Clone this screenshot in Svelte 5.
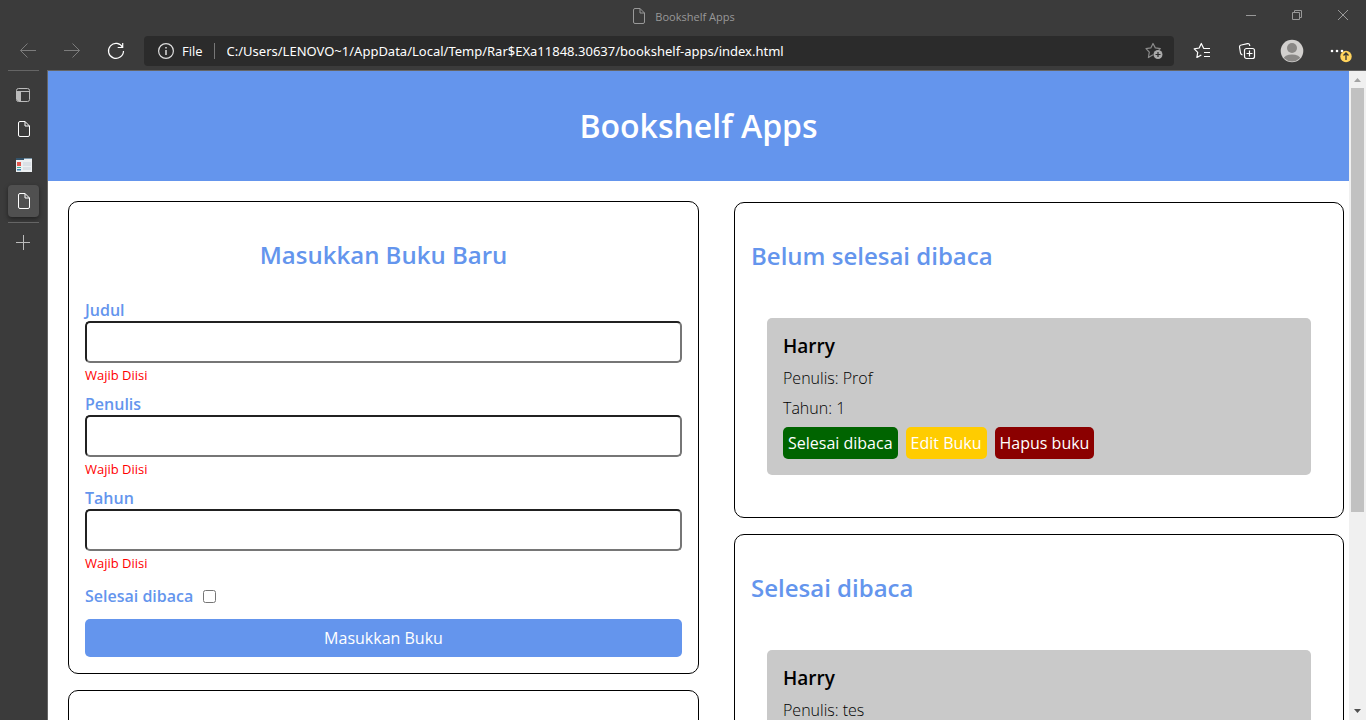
<script>
  const fields = [
    { id: 'judul', label: 'Judul', type: 'text' },
    { id: 'penulis', label: 'Penulis', type: 'text' },
    { id: 'tahun', label: 'Tahun', type: 'text' }
  ];
  const shelves = [
    { title: 'Belum selesai dibaca', book: { title: 'Harry', author: 'Prof', year: 1 }, action: 'Selesai dibaca' },
    { title: 'Selesai dibaca', book: { title: 'Harry', author: 'tes' } }
  ];
</script>

{#snippet page()}
  <svg width="16" height="18" viewBox="0 0 16 18" fill="none" stroke="currentColor" stroke-linejoin="round">
    <path d="M4 1.500H9L13.500 6v9a1.500 1.500 0 0 1-1.500 1.500H4A1.500 1.500 0 0 1 2.500 15V3A1.500 1.500 0 0 1 4 1.500z M9 1.500V6h4.500" />
  </svg>
{/snippet}

<div class="window">
  <div class="titlebar">
    <div class="title">{@render page()}<span>Bookshelf Apps</span></div>
    <div class="controls">
      <button aria-label="Minimize"><svg width="12" height="12" viewBox="0 0 12 12" stroke="currentColor"><path d="M1 6.500h10" /></svg></button>
      <button aria-label="Restore"><svg width="12" height="12" viewBox="0 0 12 12" fill="none" stroke="currentColor"><path d="M1.500 3.500h7v7h-7zM3.500 3.500v-2h7v7h-2" /></svg></button>
      <button aria-label="Close"><svg width="12" height="12" viewBox="0 0 12 12" fill="none" stroke="currentColor"><path d="M1 1l10 10M11 1L1 11" /></svg></button>
    </div>
  </div>

  <div class="toolbar">
    <button class="nav dim" aria-label="Back"><svg width="18" height="16" viewBox="0 0 18 16" fill="none" stroke="currentColor"><path d="M17 7.500H1.500M8.500 .5l-7 7 7 7" /></svg></button>
    <button class="nav dim" aria-label="Forward"><svg width="18" height="16" viewBox="0 0 18 16" fill="none" stroke="currentColor"><path d="M1 7.500h15.500M9.500 .5l7 7-7 7" /></svg></button>
    <button class="nav" aria-label="Refresh"><svg width="18" height="18" viewBox="0 0 18 18" fill="none" stroke="currentColor" stroke-width="1.2"><path d="M15.700 5.500a7.500 7.500 0 1 0 .8 3.500M15.700 1v4.500h-5" /></svg></button>
    <div class="address">
      <svg width="18" height="18" viewBox="0 0 18 18" fill="none" stroke="#ddd" stroke-width="1.2"><circle cx="9" cy="9" r="7.400" /><path d="M9 8v5M9 5v1.500" stroke-width="1.500" /></svg>
      <span class="file">File</span>
      <span class="url">C:/Users/LENOVO~1/AppData/Local/Temp/Rar$EXa11848.30637/bookshelf-apps/index.html</span>
      <button aria-label="Add to favorites">
        <svg width="18" height="18" viewBox="0 0 18 18" fill="none" stroke="#8b8b8b" stroke-width="1.200" stroke-linejoin="round"><path d="M8 12.700l-4.600 2.800.9-5.400L1 6.700l4.800-.8L8 1.500l2.300 4.400 5 .8-2.500 2.500" /><circle cx="13" cy="12.500" r="4.500" fill="#aaa" stroke="none" /><path d="M10.500 12.500h5M13 10v5" stroke="#2b2b2b" /></svg>
      </button>
    </div>
    <div class="tools">
      <button aria-label="Favorites"><svg width="18" height="18" viewBox="0 0 18 18" fill="none" stroke="currentColor" stroke-width="1.200" stroke-linejoin="round"><path d="M10.700 6.200h-.1L8.300 1.500 6.200 6l-5 .8 3.500 3.500-.8 5.200L8.300 13M10.500 6.500H17M11 10.500h6M11 14.500h6" /></svg></button>
      <button aria-label="Collections"><svg width="18" height="18" viewBox="0 0 18 18" fill="none" stroke="currentColor" stroke-width="1.200"><rect x="6.500" y="6.500" width="10" height="10" rx="2" /><path d="M11.500 8.500v6M8.500 11.500h6M4.500 13c-1.500-.4-1.800-1.200-2-2L1.600 5.500C1.300 4 2 3.200 3.300 3L9.500 1.600c1.300-.3 2 .4 2.300 2.400" /></svg></button>
      <button aria-label="Profile"><svg width="24" height="24" viewBox="0 0 24 24"><defs><clipPath id="avatar"><circle cx="12" cy="12" r="10.500" /></clipPath></defs><circle cx="12" cy="12" r="11.300" fill="#d2d0ce" /><g clip-path="url(#avatar)" fill="#8a8886"><circle cx="12" cy="9" r="5" /><ellipse cx="12" cy="20" rx="8.500" ry="4.500" /></g></svg></button>
      <button class="more" aria-label="Settings and more"><svg width="24" height="24" viewBox="0 0 24 24"><g fill="#fff"><circle cx="4" cy="12" r="1.300" /><circle cx="9" cy="12" r="1.300" /><circle cx="14" cy="12" r="1.300" /></g><circle cx="18" cy="17.500" r="5.700" fill="#ffd35c" /><path d="M18 21v-6.500M15.500 16.500l2.500-2.500 2.500 2.500" fill="none" stroke="#333" stroke-width="1.300" /></svg></button>
    </div>
  </div>

  <div class="body">
    <nav class="tabs" aria-label="Tabs">
      <button class="tab menu" aria-label="Tab menu"><svg width="16" height="16" viewBox="0 0 16 16" fill="none" stroke="#bbb"><rect x="1.500" y="1.500" width="13" height="13" rx="2" /><path d="M2 4.500h12M5.500 5v9" /><path d="M2 5h3v9H3l-1-1z" fill="#bbb" stroke="none" /></svg></button>
      <button class="tab shift" aria-label="Page">{@render page()}</button>
      <button class="tab shift" aria-label="Project page"><svg width="16" height="14" viewBox="0 0 16 14"><path fill="#eceff1" d="M0 0h16v14H0z" /><path fill="#34536a" d="M0 0h8v2H0z" /><path fill="#7895a8" d="M8 0h8v1H8z" /><path fill="#e2574c" d="M1 4h4v4H1z" /><path fill="#40b29a" d="M1 9h4v1H1z" /><path fill="#3c82ac" d="M1 11h4v1.500H1z" /><path fill="#dbe0e5" d="M7 4h8v4H7zM7 9h8v3H7z" /></svg></button>
      <button class="tab shift active" aria-label="Bookshelf Apps">{@render page()}</button>
      <button class="tab add" aria-label="New tab"><svg width="16" height="16" viewBox="0 0 16 16" stroke="#bbb"><path d="M0 7.500h14M7.500 0v15" /></svg></button>
    </nav>

    <div class="viewport">
      <header><h1>Bookshelf Apps</h1></header>
      <main>
        <div class="column">
          <section class="card form-card">
            <h2>Masukkan Buku Baru</h2>
            <form onsubmit={(e) => e.preventDefault()}>
              {#each fields as f}
                <div class="field">
                  <label for={f.id}>{f.label}</label>
                  <input id={f.id} type={f.type} />
                  <span class="error">Wajib Diisi</span>
                </div>
              {/each}
              <div class="check">
                <label for="selesai">Selesai dibaca</label>
                <input id="selesai" type="checkbox" />
              </div>
              <button class="submit">Masukkan Buku</button>
            </form>
          </section>
          <section class="card empty"></section>
        </div>
        <div class="column shelves">
          {#each shelves as s}
            <section class="card">
              <h2>{s.title}</h2>
              <article>
                <h3>{s.book.title}</h3>
                <p>Penulis: {s.book.author}</p>
                {#if s.book.year}
                  <p>Tahun: {s.book.year}</p>
                {/if}
                {#if s.action}
                  <div class="actions">
                    <button class="green">{s.action}</button>
                    <button class="yellow">Edit Buku</button>
                    <button class="red">Hapus buku</button>
                  </div>
                {/if}
              </article>
            </section>
          {/each}
        </div>
      </main>
    </div>

    <div class="scrollbar" aria-hidden="true">
      <svg width="17" height="17" viewBox="0 0 17 17"><path d="M5 11l3.500-4 3.500 4z" fill="#a3a3a3" /></svg>
      <div class="track"><div class="thumb"></div></div>
      <svg width="17" height="17" viewBox="0 0 17 17"><path d="M5 6h7l-3.500 4z" fill="#505050" /></svg>
    </div>
  </div>
</div>

<style>
  :global(body) { margin: 0; }
  * { box-sizing: border-box; }
  h1, h2, h3, p { margin: 0; }
  button { font: inherit; color: inherit; border: 0; padding: 0; background: none; }
  svg { display: block; flex: none; }

  .window {
    height: 100vh;
    display: flex;
    flex-direction: column;
    overflow: hidden;
    background: #3b3b3b;
    color: #fff;
    font-family: "Open Sans", sans-serif;
  }
  .titlebar { display: grid; grid-template-columns: 1fr auto 1fr; align-items: center; height: 32px; flex: none; color: #999; }
  .title { grid-column: 2; display: flex; align-items: center; gap: 8px; font-size: 11px; }
  .controls { display: flex; justify-content: flex-end; align-self: start; }
  .controls button { width: 46px; height: 29px; display: grid; place-items: center; }

  .toolbar { display: flex; align-items: center; height: 38px; flex: none; padding-left: 6px; }
  .nav { width: 44px; height: 36px; display: grid; place-items: center; }
  .dim { color: #7c7c7c; }
  .address {
    flex: 1; min-width: 0; height: 30px; margin-left: 6px; padding: 0 11px 0 13px;
    display: flex; align-items: center; background: #2b2b2b; border-radius: 4px; font-size: 13px;
  }
  .file { margin-left: 7px; padding-right: 11px; border-right: 1px solid #777; line-height: 16px; }
  .url { flex: 1; min-width: 0; margin-left: 12px; white-space: nowrap; overflow: hidden; font-family: "Noto Sans", sans-serif; }
  .tools { display: flex; align-items: center; padding-left: 5px; }
  .tools button { width: 45px; height: 36px; display: grid; place-items: center; }
  .tools .more { width: 52px; }

  .body { flex: 1; min-height: 0; display: flex; }
  .tabs { flex: none; display: flex; flex-direction: column; gap: 4px; padding: 0 8px; }
  .tab { width: 31px; height: 32px; display: grid; place-items: center; border-radius: 4px; }
  .menu { height: 39px; padding: 10px 1px 0 0; border-top: 1px solid #656565; border-radius: 0; }
  .shift { padding-left: 1px; }
  .active { background: #505050; box-shadow: 0 2px 4px #222; }
  .add { margin-top: 1px; height: 40px; border-top: 1px solid #656565; border-radius: 0; }

  .viewport {
    flex: 1; min-width: 0; overflow: hidden; border: solid #656565; border-width: 1px 0 0 1px;
    background: #fff; color: #000; font-size: 16px; line-height: 22px;
  }
  header { padding: 33px 20px; background: cornflowerblue; color: #fff; text-align: center; }
  h1 { font-size: 32px; line-height: 44px; font-weight: 600; }
  main { display: grid; grid-template-columns: 631fr 610fr; gap: 35px; padding: 20px 5px 20px 20px; }
  .column { display: flex; flex-direction: column; gap: 16px; }
  .shelves { padding-top: 1px; }
  .card { border: 1px solid #000; border-radius: 10px; padding: 16px; }
  .empty { height: 200px; }
  h2 { padding: 20px 0 28px; font-size: 24px; line-height: 33px; font-weight: 600; color: cornflowerblue; }
  .form-card h2 { text-align: center; }
  .field { display: flex; flex-direction: column; margin-bottom: 8px; }
  label { font-weight: 600; color: cornflowerblue; }
  .field input { width: 100%; height: 42px; border: 2px inset #767676; border-radius: 5px; background: #fff; padding: 0 8px; font: inherit; }
  .error { padding: 3px 0 1px; line-height: 18px; font-size: 13px; color: red; }
  .check { display: flex; align-items: center; gap: 10px; padding-top: 4px; }
  .check input { margin: 0; width: 13px; height: 13px; }
  .submit { width: 100%; height: 38px; margin-top: 12px; border-radius: 5px; background: cornflowerblue; color: #fff; }

  article { margin: 18px 16px 26px; padding: 16px; border-radius: 5px; background: #c9c9c9; display: flex; flex-direction: column; gap: 8px; }
  h3 { font-size: 19px; line-height: 25px; font-weight: 600; }
  p { font-weight: 300; }
  .actions { display: flex; gap: 8px; color: #fff; }
  .actions button { height: 32px; padding: 0 5px; border-radius: 5px; }
  .green { background: #006400; }
  .yellow { background: #ffcc00; }
  .red { background: #8b0000; }

  .scrollbar { width: 17px; flex: none; display: flex; flex-direction: column; background: #f0f0f0; border-top: 1px solid #656565; }
  .track { flex: 1; padding: 0 2px; }
  .thumb { height: 69%; background: #c1c1c1; }
</style>
